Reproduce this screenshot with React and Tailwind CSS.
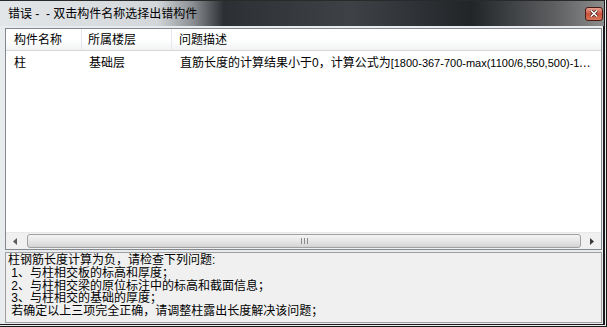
import React from "react";

const font = {
  fontFamily: '"Liberation Sans", "Noto Sans CJK SC", sans-serif',
};

const rows = [
  {
    name: "柱",
    floor: "基础层",
    cn: "直筋长度的计算结果小于0，计算公式为",
    expr: "[1800-367-700-max(1100/6,550,500)-1100/6-550,500)-1",
  },
];

const hints = [
  "柱钢筋长度计算为负，请检查下列问题:",
  " 1、与柱相交板的标高和厚度；",
  " 2、与柱相交梁的原位标注中的标高和截面信息；",
  " 3、与柱相交的基础的厚度；",
  " 若确定以上三项完全正确，请调整柱露出长度解决该问题；",
];

function CloseButton() {
  return (
    <div className="w-[18px] h-[14px] rounded-[3px] border border-[#4a1a14] bg-gradient-to-b from-[#e8a090] via-[#c9503c] to-[#d8765a] flex items-center justify-center">
      <svg width="8" height="7" viewBox="0 0 8 7">
        <path d="M1 0.5 L7 6.5 M7 0.5 L1 6.5" stroke="#3a1a14" strokeWidth="3" />
        <path d="M1 0.5 L7 6.5 M7 0.5 L1 6.5" stroke="#ffffff" strokeWidth="1.6" />
      </svg>
    </div>
  );
}

function HScrollBar() {
  return (
    <div className="h-[17px] flex items-stretch bg-[#f0f0f0] border-t border-[#e8e8e8]">
      <div className="w-[18px] flex items-center justify-center">
        <svg width="4" height="7" viewBox="0 0 4 7">
          <path d="M4 0 L0 3.5 L4 7 Z" fill="#5a5a5a" />
        </svg>
      </div>
      <div className="flex-1 py-[1px] pl-[3px] pr-[2px]">
        <div className="h-full rounded-[3px] border border-[#a0a0a0] bg-gradient-to-b from-[#f4f4f4] via-[#e6e6e6] to-[#d4d4d4] flex items-center justify-center">
          <svg width="7" height="6" viewBox="0 0 7 6">
            <path d="M0.5 0 V6 M3.5 0 V6 M6.5 0 V6" stroke="#8a8a8a" strokeWidth="1" />
          </svg>
        </div>
      </div>
      <div className="w-[18px] flex items-center justify-center">
        <svg width="4" height="7" viewBox="0 0 4 7">
          <path d="M0 0 L4 3.5 L0 7 Z" fill="#3a3a3a" />
        </svg>
      </div>
    </div>
  );
}

export default function App() {
  return (
    <div
      className="w-[607px] h-[327px] flex flex-col bg-[#e9ecef] border-r-[3px] border-b-[3px] border-double border-[#1a1a1a] text-[12px] text-black overflow-hidden"
      style={font}
    >
      {/* title bar */}
      <div className="h-[26px] shrink-0 flex items-center justify-between pl-[8px] pr-[1px] border-t border-[#2a2a2a] bg-[linear-gradient(to_right,#e2e6e9_0%,#d3d7da_26%,#8a8e92_32%,#2c3034_37%,#3e4246_58%,#222528_78%,#5e6062_92%,#8c8c8c_100%)]">
        <span className="leading-none whitespace-pre">错误 -  - 双击构件名称选择出错构件</span>
        <CloseButton />
      </div>

      {/* client area */}
      <div className="flex-1 flex flex-col pl-[5px] pr-[1px] pt-[2px] pb-[1px] gap-[2px] border-r border-[#1a1a1a]">
        {/* list view */}
        <div className="flex-1 flex flex-col border border-[#828790] bg-white">
          <div className="h-[22px] shrink-0 flex bg-gradient-to-b from-white via-white to-[#f2f3f5] border-b border-[#d5d5d5]">
            <div className="w-[76px] pl-[8px] flex items-center border-r border-[#e3e8ee]">构件名称</div>
            <div className="w-[90px] pl-[6px] flex items-center border-r border-[#e3e8ee]">所属楼层</div>
            <div className="flex-1 pl-[7px] flex items-center">问题描述</div>
          </div>
          <div className="flex-1 pt-[3px]">
            {rows.map((r, i) => (
              <div key={i} className="h-[17px] flex items-center">
                <div className="w-[76px] pl-[8px]">{r.name}</div>
                <div className="w-[90px] pl-[7px]">{r.floor}</div>
                <div className="w-[423px] pl-[8px] truncate">
                  {r.cn}
                  <span className="text-[11px]">{r.expr}</span>
                </div>
              </div>
            ))}
          </div>
          <HScrollBar />
        </div>

        {/* hint text */}
        <div className="h-[71px] shrink-0 border border-[#a0a0a0] bg-[#f0f0f0] pl-[2px] pt-[1px] leading-[12.8px] whitespace-pre">
          {hints.map((h, i) => (
            <div key={i}>{h}</div>
          ))}
        </div>
      </div>
    </div>
  );
}
